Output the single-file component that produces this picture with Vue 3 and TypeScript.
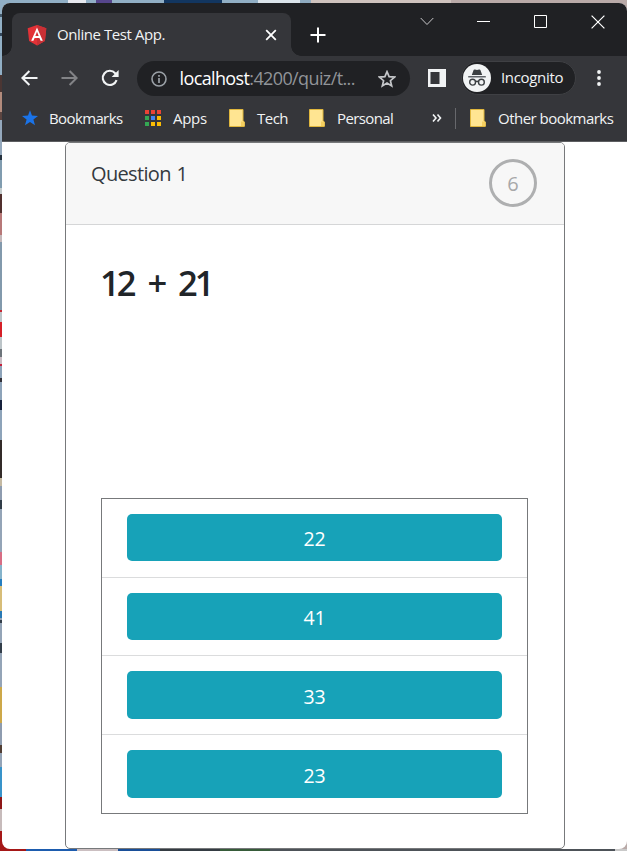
<script setup lang="ts">
import { ref } from 'vue'

interface Bookmark {
  label: string
  kind: 'star' | 'apps' | 'folder'
  key: string
}

const bookmarks: Bookmark[] = [
  { label: 'Bookmarks', kind: 'star', key: 'main' },
  { label: 'Apps', kind: 'apps', key: 'apps' },
  { label: 'Tech', kind: 'folder', key: 'tech' },
  { label: 'Personal', kind: 'folder', key: 'personal' },
]
const appColors: string[] = [
  '#ea4335', '#ea4335', '#ea4335',
  '#34a853', '#4285f4', '#fbbc04',
  '#34a853', '#fbbc04', '#fbbc04',
]
const question = { title: 'Question 1', prompt: '12 + 21' }
const options: number[] = [22, 41, 33, 23]
const secondsLeft = ref(6)
const selected = ref<number | null>(null)
</script>

<template>
  <div class="desktop">
    <div class="window">
      <div class="tabstrip">
        <div class="tab">
          <svg class="angular" width="20" height="21" viewBox="0 0 20 21">
            <path d="M10 0 19.3 3.3 17.9 16 10 20.5 2.1 16 .7 3.3Z" fill="#e23237" />
            <path d="M10 0 19.3 3.3 17.9 16 10 20.5Z" fill="#c93035" />
            <path d="M10 2.6 4.2 15.8H6.4L7.6 12.9H12.4L13.6 15.8H15.8ZM10 6.8 11.7 11H8.3Z" fill="#fff" fill-rule="evenodd" />
          </svg>
          <span class="tab-title">Online Test App.</span>
          <svg class="tab-close" width="12" height="12" viewBox="0 0 12 12"><path d="M1.2 1.2 10.8 10.8M10.8 1.2 1.2 10.8" stroke="#fff" stroke-width="1.8" /></svg>
        </div>
        <svg class="new-tab" width="16" height="16" viewBox="0 0 16 16"><path d="M8 .5V15.5M.5 8H15.5" stroke="#fff" stroke-width="2" /></svg>
        <div class="controls">
          <svg width="14" height="9" viewBox="0 0 14 9"><path d="M.7 1 7 7.5 13.3 1" fill="none" stroke="#c8c8ca" stroke-width="1" /></svg>
          <svg width="13" height="13" viewBox="0 0 13 13"><path d="M0 6.5H13" stroke="#fff" stroke-width="1" /></svg>
          <svg width="13" height="13" viewBox="0 0 13 13"><path d="M.5.5H12.5V12.5H.5Z" fill="none" stroke="#fff" /></svg>
          <svg width="14" height="14" viewBox="0 0 14 14"><path d="M.6.6 13.4 13.4M13.4.6.6 13.4" stroke="#fff" stroke-width="1.2" /></svg>
        </div>
      </div>

      <div class="toolbar">
        <svg class="back" width="17" height="16" viewBox="0 0 17 16"><path d="M16.5 8H1.6M8.4 1 1.4 8 8.4 15" fill="none" stroke="#f1f3f4" stroke-width="2" /></svg>
        <svg class="forward" width="17" height="16" viewBox="0 0 17 16"><path d="M.5 8H15.4M8.6 1 15.6 8 8.6 15" fill="none" stroke="#828386" stroke-width="2" /></svg>
        <svg class="reload" width="18" height="18" viewBox="0 0 18 18"><path d="M15.6 11.2A7.1 7.1 0 1 1 14.2 4.2L15.5 5.5" fill="none" stroke="#f1f3f4" stroke-width="2.1" /><path d="M17.6 1V8H10.6Z" fill="#f1f3f4" /></svg>
        <div class="omnibox">
          <svg class="info" width="16" height="16" viewBox="0 0 16 16"><circle cx="8" cy="8" r="7" fill="none" stroke="#9aa0a6" stroke-width="1.6" /><path d="M8 7V12M8 4V5.7" stroke="#9aa0a6" stroke-width="1.7" /></svg>
          <span class="url"><b>localhost</b>:4200/quiz/t...</span>
          <svg class="favorite" width="18" height="18" viewBox="0 0 18 18"><path d="M9 1.7 11.1 6.7 16.5 7.1 12.4 10.7 13.7 16 9 13.1 4.3 16 5.6 10.7 1.5 7.1 6.9 6.7Z" fill="none" stroke="#c4c6c9" stroke-width="1.7" /></svg>
        </div>
        <svg class="panel" width="18" height="18" viewBox="0 0 18 18"><path d="M0 0H18V18H0ZM2.5 3V15H11.5V3Z" fill="#f1f3f4" fill-rule="evenodd" /></svg>
        <div class="incognito">
          <svg width="28" height="28" viewBox="0 0 28 28">
            <circle cx="14" cy="14" r="14" fill="#f1f3f4" />
            <path d="M8.8 11 10.5 6.3Q10.8 5.2 12 5.5L14 6 16 5.5Q17.2 5.2 17.5 6.3L19.2 11Z" fill="#3c4043" />
            <path d="M5.2 12.7H22.8" stroke="#5f6368" stroke-width="1.5" />
            <circle cx="9.6" cy="18.2" r="2.9" fill="none" stroke="#3c4043" stroke-width="1.4" />
            <circle cx="18.4" cy="18.2" r="2.9" fill="none" stroke="#3c4043" stroke-width="1.4" />
            <path d="M12.4 18Q14 16.6 15.6 18" fill="none" stroke="#3c4043" stroke-width="1.3" />
          </svg>
          <span>Incognito</span>
        </div>
        <svg class="menu" width="4" height="16" viewBox="0 0 4 16"><circle cx="2" cy="2" r="1.9" fill="#f1f3f4" /><circle cx="2" cy="8" r="1.9" fill="#f1f3f4" /><circle cx="2" cy="14" r="1.9" fill="#f1f3f4" /></svg>
      </div>

      <div class="bookmarks">
        <div v-for="item in bookmarks" :key="item.key" class="bookmark" :class="item.key">
          <svg v-if="item.kind === 'star'" width="16" height="16" viewBox="0 0 16 16"><path d="M8 .2 10 5.6 16 5.9 11.4 9.5 13 15.2 8 12 3 15.2 4.6 9.5 0 5.9 6 5.6Z" fill="#1a73e8" /></svg>
          <svg v-else-if="item.kind === 'apps'" width="16" height="16" viewBox="0 0 16 16">
            <rect v-for="(color, i) in appColors" :key="i" :x="(i % 3) * 6" :y="Math.floor(i / 3) * 6" width="4" height="4" :fill="color" />
          </svg>
          <svg v-else width="16" height="18" viewBox="0 0 16 18"><path d="M.5.5H14V12L15.3 13V17.5H.5Z" fill="#ffe592" stroke="#e0b73d" /><path d="M12 17V12.5H15.5V17Z" fill="#f5cf60" /></svg>
          <span>{{ item.label }}</span>
        </div>
        <svg class="more" width="10" height="8" viewBox="0 0 10 8"><path d="M1 .5 4 4 1 7.5M5.5.5 8.5 4 5.5 7.5" fill="none" stroke="#f1f3f4" stroke-width="1.6" /></svg>
        <i class="separator"></i>
        <div class="bookmark other">
          <svg width="16" height="18" viewBox="0 0 16 18"><path d="M.5.5H14V12L15.3 13V17.5H.5Z" fill="#ffe592" stroke="#e0b73d" /><path d="M12 17V12.5H15.5V17Z" fill="#f5cf60" /></svg>
          <span>Other bookmarks</span>
        </div>
      </div>

      <main class="page">
        <section class="card">
          <header class="card-header">
            <span class="question-title">{{ question.title }}</span>
            <div class="timer"><span>{{ secondsLeft }}</span></div>
          </header>
          <div class="card-body">
            <h1>{{ question.prompt }}</h1>
            <div class="options">
              <div v-for="option in options" :key="option" class="option">
                <button type="button" :aria-pressed="selected === option" @click="selected = option">{{ option }}</button>
              </div>
            </div>
          </div>
        </section>
      </main>
    </div>
  </div>
</template>

<style>
body { overflow: hidden; }
</style>

<style scoped>
* { box-sizing: border-box; }
svg { display: block; flex: none; }
.desktop {
  width: 627px;
  height: 851px;
  padding: 3px 0 2px 2px;
  font-family: "Open Sans", "Noto Sans", sans-serif;
  background:
    linear-gradient(90deg, #e6e8ee 0 18px, transparent 18px 28px, #56468c 28px 44px, transparent 44px 96px, #123660 96px 154px, transparent 154px 190px, #dce5eb 190px 232px, #8fabc0 232px 243px, #cfc3be 243px 383px, #b9aaa8 383px) 68px 0 / 559px 3px no-repeat,
    linear-gradient(90deg, #a51717 0 26px, #1d5cae 26px 77px, #cbbfc1 77px 118px, #184e98 118px 160px, #343b42 160px 220px, #365b39 220px 270px, #4d5258 270px 615px, #c9c9c9 615px) 0 849px / 627px 2px no-repeat,
    linear-gradient(180deg, #91afc5 0 14px, #43586a 14px 17px, #91afc5 17px 33px, #32475c 33px 36px, #91afc5 36px 75px, #4b3633 75px 92px, #b28b7c 92px 112px, #5c4540 112px 120px, #94a8bc 120px 155px, #26333f 155px 160px, #809caf 160px 188px, #c4cccd 188px 194px, #51302e 194px 213px, #b77878 213px 235px, #c4b8ba 235px 242px, #8299ac 242px 310px, #c62833 310px 312px, #bcc4c8 312px 322px, #d51f27 322px 337px, #bcc4c8 337px 349px, #6d747a 349px 357px, #c9bdc4 357px 364px, #c5203b 364px 366px, #8da3b9 366px 378px, #323038 378px 382px, #8da3b9 382px 400px, #16213c 400px 410px, #8da3b9 410px 440px, #332b29 440px 478px, #c4b9a2 478px 486px, #8e9caf 486px 500px, #303c47 500px 509px, #94a4b7 509px 552px, #d76d84 552px 565px, #85b3cb 565px 579px, #257ec0 579px 586px, #d7bd78 586px 611px, #2879b5 611px 618px, #94a4b7 618px 620px, #333e49 620px 623px, #94a4b7 623px 643px, #323d49 643px 653px, #94a4b7 653px 687px, #cda849 687px 723px, #8e9caf 723px 745px, #513e34 745px 753px, #94a4b7 753px 767px, #3893ca 767px 797px, #8e1617 797px 809px, #c7bbbb 809px 831px, #a51717 831px) 0 0 / 12px 851px no-repeat,
    linear-gradient(90deg, #91afc5 0 50%, #b9aaa8 50%);
}
.window {
  display: flex;
  flex-direction: column;
  width: 625px;
  height: 846px;
  overflow: hidden;
  border-radius: 8px;
  background: #fff;
}
.tabstrip {
  display: flex;
  flex: none;
  height: 53px;
  padding: 10px 0 0 10px;
  background: #202124;
}
.tab {
  position: relative;
  display: flex;
  align-items: center;
  width: 279px;
  height: 43px;
  padding: 0 14px 0 15px;
  border-radius: 8px 8px 0 0;
  background: #35363a;
}
.tab::before,
.tab::after {
  content: "";
  position: absolute;
  bottom: 0;
  width: 10px;
  height: 10px;
}
.tab::before { left: -10px; background: radial-gradient(circle at 0 0, transparent 9.5px, #35363a 10px); }
.tab::after { right: -10px; background: radial-gradient(circle at 100% 0, transparent 9.5px, #35363a 10px); }
.angular { margin-top: 1px; }
.tab-title {
  flex: 1;
  margin-left: 10px;
  padding-bottom: 1px;
  color: #f1f3f4;
  font-size: 15px;
  letter-spacing: -0.42px;
  white-space: nowrap;
}
.new-tab { margin: 14px 0 0 19px; }
.controls {
  display: grid;
  grid-template-columns: repeat(4, 57px);
  justify-items: center;
  align-items: center;
  height: 17px;
  margin-left: 72px;
}
.toolbar {
  display: flex;
  align-items: center;
  flex: none;
  height: 43px;
  padding: 1px 0 0 19px;
  background: #35363a;
}
.forward { margin-left: 23px; }
.reload { margin-left: 23px; }
.omnibox {
  display: flex;
  align-items: center;
  width: 273px;
  height: 35px;
  margin: 1px 0 0 18px;
  padding: 0 14px;
  border-radius: 18px;
  background: #202124;
}
.url {
  flex: 1;
  margin-left: 12.5px;
  padding-bottom: 1px;
  color: #919499;
  font-size: 18px;
  letter-spacing: -0.62px;
  white-space: nowrap;
}
.url b { color: #fff; font-weight: 400; }
.panel { margin-left: 18px; }
.incognito {
  display: flex;
  align-items: center;
  width: 115px;
  height: 34px;
  margin-left: 15px;
  padding-left: 1px;
  border: 1px solid #3f4044;
  border-radius: 17px;
  color: #f1f3f4;
  font-size: 15px;
  letter-spacing: -0.33px;
  background: #202124;
}
.incognito span { margin-left: 10px; padding-bottom: 2px; }
.menu { margin-left: 21px; }
.bookmarks {
  display: flex;
  align-items: center;
  flex: none;
  height: 43px;
  padding: 0 0 4px 20px;
  border-bottom: 1px solid #5d5e61;
  background: #35363a;
}
.bookmark {
  display: flex;
  align-items: center;
  gap: 12px;
  color: #f1f3f4;
  font-size: 15px;
  letter-spacing: -0.52px;
  white-space: nowrap;
}
.main { width: 123px; gap: 11px; letter-spacing: -0.62px; }
.apps { width: 84px; letter-spacing: -0.3px; }
.tech { width: 80px; }
.personal { width: 123px; letter-spacing: -0.6px; }
.more { width: 10px; }
.separator { width: 1px; height: 21px; margin: 0 14px 0 13px; background: #67686c; }
.page {
  display: flex;
  flex: 1;
  min-height: 0;
  padding: 0 62px 0 63px;
}
.card {
  width: 500px;
  height: 707px;
  overflow: hidden;
  border: 1px solid #77797b;
  border-radius: 5px;
}
.card-header {
  display: flex;
  justify-content: space-between;
  height: 82px;
  padding: 16px 27px 0 25px;
  border-bottom: 1px solid #d5d6d7;
  background: #f7f7f7;
}
.question-title { color: #343a40; font-size: 20px; line-height: 30px; letter-spacing: -0.65px; word-spacing: 1px; }
.timer {
  display: flex;
  align-items: center;
  justify-content: center;
  width: 48px;
  height: 48px;
  border: 3px solid #aeafb0;
  border-radius: 50%;
  color: #a7a8a9;
  font-size: 20px;
}
.timer span { padding-top: 1px; }
.card-body { padding: 34px 36px 0 35px; }
h1 {
  height: 48px;
  margin: 0 0 0 -1px;
  color: #212529;
  font-size: 34.5px;
  font-weight: 600;
  line-height: 48px;
  letter-spacing: -3px;
  word-spacing: 8px;
}
.options {
  display: grid;
  grid-template-rows: 79px 78px 79px 78px;
  height: 316px;
  margin-top: 191px;
  border: 1px solid #77797b;
}
.option { padding: 15px 25px; border-bottom: 1px solid #dbdcdd; }
.option:last-child { border-bottom: 0; }
button {
  display: block;
  width: 375px;
  height: 47px;
  padding: 2px 0 0;
  border: 0;
  border-radius: 5px;
  color: #fff;
  background: #17a2b8;
  font: 400 19.5px/45px "Open Sans", "Noto Sans", sans-serif;
  letter-spacing: -0.2px;
}
.option:nth-child(n + 3) button { height: 48px; }
</style>
